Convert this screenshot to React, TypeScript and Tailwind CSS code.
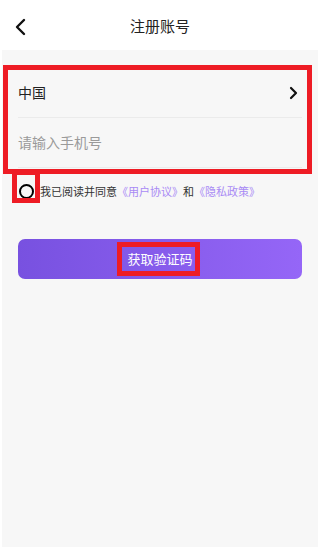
export default function App() {
  return (
    <div
      className="w-[320px] h-[549px] bg-white overflow-hidden"
      style={{ fontFamily: '"Noto Sans CJK SC", "Noto Sans", sans-serif' }}
    >
      {/* header */}
      <div className="relative h-[50px] flex items-center justify-center">
        <svg className="absolute left-[14px] top-[18px]" width="14" height="18" viewBox="0 0 14 18">
          <path d="M10 2 L3 9 L10 16" fill="none" stroke="#111" strokeWidth="2.4" strokeLinecap="round" strokeLinejoin="round" />
        </svg>
        <span className="text-[15px] text-[#222] mt-[3px]">注册账号</span>
      </div>

      {/* body */}
      <div className="relative mx-[2px] h-[497px] bg-[#f7f7f7] px-4 pt-[18px]">
        <div className="h-[50px] flex items-center justify-between border-b border-[#ebebeb]">
          <span className="text-[14px] text-[#222]">中国</span>
          <svg width="10" height="14" viewBox="0 0 10 14" className="mr-[4px]">
            <path d="M3 2 L8 7 L3 12" fill="none" stroke="#111" strokeWidth="2.2" strokeLinecap="round" strokeLinejoin="round" />
          </svg>
        </div>
        <div className="h-[50px] flex items-center border-b border-[#ebebeb]">
          <span className="text-[14px] text-[#9a9a9a]">请输入手机号</span>
        </div>

        <div className="mt-[15px] h-[16px] flex items-center">
          <div className="w-[15px] h-[15px] rounded-full border-2 border-black ml-[1px]" />
          <p className="ml-[6px] text-[11px] text-[#333] whitespace-nowrap">
            我已阅读并同意<span className="text-[#a98af5]">《用户协议》</span>和<span className="text-[#a98af5]">《隐私政策》</span>
          </p>
        </div>

        <button className="mt-[40px] w-full h-[40px] rounded-[7px] bg-gradient-to-r from-[#7851e0] to-[#9566f7] flex items-center justify-center">
          <span className="text-[13px] text-white">获取验证码</span>
        </button>

        {/* red annotation boxes */}
        <div className="absolute left-[1px] top-[15px] w-[309px] h-[109px] border-[5px] border-[#ee1c25]" />
        <div className="absolute left-[10px] top-[120px] w-[28px] h-[33px] border-[5px] border-[#ee1c25]" />
        <div className="absolute left-[115px] top-[192px] w-[83px] h-[34px] border-[5px] border-[#ee1c25]" />
      </div>
    </div>
  );
}
